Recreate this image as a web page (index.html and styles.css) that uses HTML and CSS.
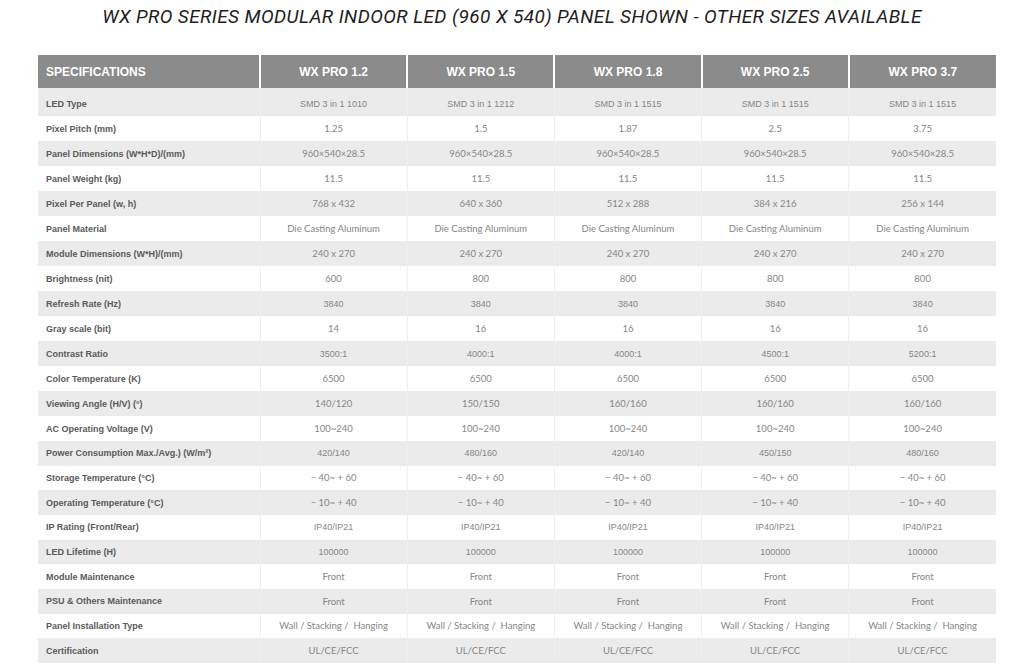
FILE: index.html
```html
<!DOCTYPE html>
<html>
<head>
<meta charset="utf-8">
<link rel="stylesheet" href="styles.css">
</head>
<body>
<h1 class="title">WX PRO SERIES MODULAR INDOOR LED (960 X 540) PANEL SHOWN - OTHER SIZES AVAILABLE</h1>
<table class="spec">
<colgroup><col class="c-label"><col><col><col><col><col></colgroup>
<thead>
<tr><th class="h-label">SPECIFICATIONS</th><th>WX PRO 1.2</th><th>WX PRO 1.5</th><th>WX PRO 1.8</th><th>WX PRO 2.5</th><th>WX PRO 3.7</th></tr>
</thead>
<tbody>
<tr class="hv first"><td>LED Type</td><td>SMD 3 in 1 1010</td><td>SMD 3 in 1 1212</td><td>SMD 3 in 1 1515</td><td>SMD 3 in 1 1515</td><td>SMD 3 in 1 1515</td></tr>
<tr><td>Pixel Pitch (mm)</td><td>1.25</td><td>1.5</td><td>1.87</td><td>2.5</td><td>3.75</td></tr>
<tr><td>Panel Dimensions (W*H*D)/(mm)</td><td>960×540×28.5</td><td>960×540×28.5</td><td>960×540×28.5</td><td>960×540×28.5</td><td>960×540×28.5</td></tr>
<tr><td>Panel Weight (kg)</td><td>11.5</td><td>11.5</td><td>11.5</td><td>11.5</td><td>11.5</td></tr>
<tr><td>Pixel Per Panel (w, h)</td><td>768 x 432</td><td>640 x 360</td><td>512 x 288</td><td>384 x 216</td><td>256 x 144</td></tr>
<tr><td>Panel Material</td><td>Die Casting Aluminum</td><td>Die Casting Aluminum</td><td>Die Casting Aluminum</td><td>Die Casting Aluminum</td><td>Die Casting Aluminum</td></tr>
<tr><td>Module Dimensions (W*H)/(mm)</td><td>240 x 270</td><td>240 x 270</td><td>240 x 270</td><td>240 x 270</td><td>240 x 270</td></tr>
<tr><td>Brightness (nit)</td><td>600</td><td>800</td><td>800</td><td>800</td><td>800</td></tr>
<tr class="hv"><td>Refresh Rate (Hz)</td><td>3840</td><td>3840</td><td>3840</td><td>3840</td><td>3840</td></tr>
<tr><td>Gray scale (bit)</td><td>14</td><td>16</td><td>16</td><td>16</td><td>16</td></tr>
<tr class="hv"><td>Contrast Ratio</td><td>3500:1</td><td>4000:1</td><td>4000:1</td><td>4500:1</td><td>5200:1</td></tr>
<tr><td>Color Temperature (K)</td><td>6500</td><td>6500</td><td>6500</td><td>6500</td><td>6500</td></tr>
<tr><td>Viewing Angle (H/V) (°)</td><td>140/120</td><td>150/150</td><td>160/160</td><td>160/160</td><td>160/160</td></tr>
<tr><td>AC Operating Voltage (V)</td><td>100~240</td><td>100~240</td><td>100~240</td><td>100~240</td><td>100~240</td></tr>
<tr class="hv tight"><td>Power Consumption Max./Avg.) (W/m²)</td><td>420/140</td><td>480/160</td><td>420/140</td><td>450/150</td><td>480/160</td></tr>
<tr class="tight"><td>Storage Temperature (°C)</td><td>− 40~ + 60</td><td>− 40~ + 60</td><td>− 40~ + 60</td><td>− 40~ + 60</td><td>− 40~ + 60</td></tr>
<tr class="tight"><td>Operating Temperature (°C)</td><td>− 10~ + 40</td><td>− 10~ + 40</td><td>− 10~ + 40</td><td>− 10~ + 40</td><td>− 10~ + 40</td></tr>
<tr class="hv tight"><td>IP Rating (Front/Rear)</td><td>IP40/IP21</td><td>IP40/IP21</td><td>IP40/IP21</td><td>IP40/IP21</td><td>IP40/IP21</td></tr>
<tr class="hv tight"><td>LED Lifetime (H)</td><td>100000</td><td>100000</td><td>100000</td><td>100000</td><td>100000</td></tr>
<tr class="tight"><td>Module Maintenance</td><td>Front</td><td>Front</td><td>Front</td><td>Front</td><td>Front</td></tr>
<tr class="tight"><td>PSU &amp; Others Maintenance</td><td>Front</td><td>Front</td><td>Front</td><td>Front</td><td>Front</td></tr>
<tr class="tight"><td>Panel Installation Type</td><td>Wall / Stacking /&nbsp; Hanging</td><td>Wall / Stacking /&nbsp; Hanging</td><td>Wall / Stacking /&nbsp; Hanging</td><td>Wall / Stacking /&nbsp; Hanging</td><td>Wall / Stacking /&nbsp; Hanging</td></tr>
<tr class="tight"><td>Certification</td><td>UL/CE/FCC</td><td>UL/CE/FCC</td><td>UL/CE/FCC</td><td>UL/CE/FCC</td><td>UL/CE/FCC</td></tr>
</tbody>
</table>
</body>
</html>
```
FILE: styles.css
```css
html, body {
  margin: 0;
  padding: 0;
  background: #ffffff;
}

.title {
  margin: 0;
  height: 55px;
  padding-top: 5px;
  box-sizing: border-box;
  text-align: center;
  font-family: Roboto, "Liberation Sans", sans-serif;
  font-style: italic;
  font-weight: 400;
  font-size: 19px;
  line-height: 24px;
  color: #1e1e1e;
  letter-spacing: 0.4px;
}

.spec {
  margin-left: 38px;
  width: 958px;
  border-collapse: collapse;
  table-layout: fixed;
}

.c-label {
  width: 222px;
}

.spec th {
  height: 33px;
  padding: 0;
  background: #8b8b8b;
  color: #ffffff;
  font-family: "Liberation Sans", Arial, sans-serif;
  font-weight: 700;
  font-size: 12px;
  text-align: center;
  border-left: 2px solid #ffffff;
}

.spec th.h-label {
  text-align: left;
  padding-left: 8px;
  border-left: none;
}

.spec tbody tr {
  height: 25px;
}

.spec tbody tr.first {
  height: 28px;
}

.spec tbody tr.first td {
  padding-top: 3px;
}

.spec tbody tr.tight {
  height: 24.67px;
}

.spec td {
  padding: 0;
  text-align: center;
  font-family: Lato, "Open Sans", sans-serif;
  font-size: 9.5px;
  color: #868686;
  border-left: 1px solid #efefef;
}

.spec td:first-child {
  text-align: left;
  padding-left: 8px;
  font-family: "Liberation Sans", Arial, sans-serif;
  font-weight: 700;
  font-size: 9px;
  color: #5a5a5a;
  border-left: none;
}

.spec tr.hv td {
  font-family: "Liberation Sans", Arial, sans-serif;
  font-size: 9px;
}

.spec tbody tr:nth-child(odd) td {
  background: #ebebeb;
}

.spec tbody tr:nth-child(even) td {
  background: #ffffff;
}
```
